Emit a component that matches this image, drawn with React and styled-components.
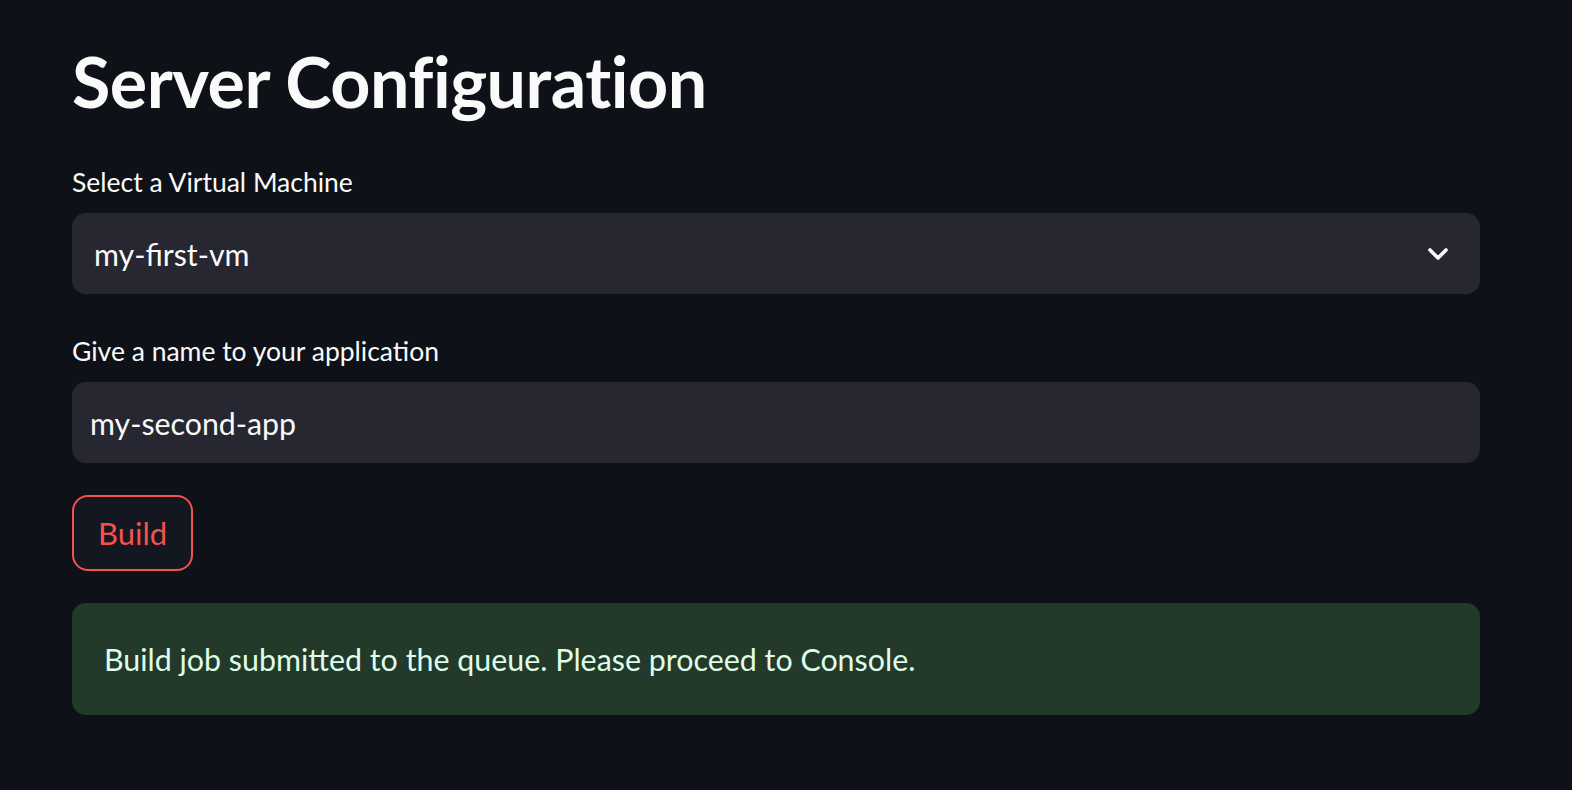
import styled, { createGlobalStyle } from "styled-components"

const GlobalStyle = createGlobalStyle`
  html, body {
    margin: 0;
    padding: 0;
    background: #0e1117;
  }
  body {
    font-family: Lato, "Noto Sans", sans-serif;
    color: #fafafa;
  }
`

const Chevron = () => (
  <svg width="22" height="14" viewBox="0 0 22 14">
    <polyline points="3,3 11,11 19,3" fill="none" stroke="#fafafa" strokeWidth="3.6" strokeLinecap="round" strokeLinejoin="round" />
  </svg>
)

const App = () => {
  return (
    <>
      <GlobalStyle />
      <Page>
        <Title>Server Configuration</Title>

        <Field>
          <Label>Select a Virtual Machine</Label>
          <SelectBox>
            <FieldValue $indent="22px">my-first-vm</FieldValue>
            <Chevron />
          </SelectBox>
        </Field>

        <Field>
          <Label>Give a name to your application</Label>
          <InputBox>
            <FieldValue $indent="18px">my-second-app</FieldValue>
          </InputBox>
        </Field>

        <BuildButton>Build</BuildButton>

        <SuccessAlert>Build job submitted to the queue. Please proceed to Console.</SuccessAlert>
      </Page>
    </>
  )
}

const Page = styled.main`
  width: 1408px;
  padding: 36px 0 0 72px;
  display: flex;
  flex-direction: column;
`

const Title = styled.h1`
  margin: 0 0 40px;
  font-size: 70px;
  font-weight: 700;
  line-height: 90px;
  letter-spacing: -0.5px;
`

const Field = styled.div`
  display: flex;
  flex-direction: column;
  gap: 15px;
  margin-bottom: 41px;
`

const Label = styled.label`
  font-size: 26.5px;
  line-height: 32px;
  color: #fafafa;
`

const SelectBox = styled.div`
  height: 81px;
  background: #262730;
  border-radius: 14px;
  display: flex;
  align-items: center;
  justify-content: space-between;
  padding-right: 31px;
`

const InputBox = styled.div`
  height: 81px;
  background: #262730;
  border-radius: 14px;
  display: flex;
  align-items: center;
`

const FieldValue = styled.span`
  padding-left: ${p => p.$indent};
  font-size: 30.3px;
  color: #fafafa;
`

const BuildButton = styled.button`
  align-self: flex-start;
  width: 121px;
  height: 76px;
  margin-top: -9px;
  margin-bottom: 32px;
  background: #131720;
  border: 2px solid #f5524e;
  border-radius: 16px;
  color: #f5524e;
  font-family: Lato, "Noto Sans", sans-serif;
  font-size: 31px;
  cursor: pointer;
`

const SuccessAlert = styled.div`
  height: 112px;
  box-sizing: border-box;
  padding: 0 32px;
  display: flex;
  align-items: center;
  background: #233a2b;
  border-radius: 14px;
  color: #dffde9;
  font-size: 30.4px;
`

export default App
